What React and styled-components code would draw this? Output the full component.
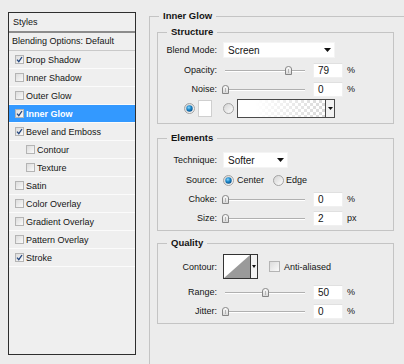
import React from "react";
import styled, { createGlobalStyle } from "styled-components";

const Global = createGlobalStyle`
  html, body { margin: 0; padding: 0; background: #ececec; overflow: hidden; }
  body { font-family: "Liberation Sans", Arial, sans-serif; font-size: 9px; color: #141414; }
`;

const Page = styled.div`
  display: flex;
  align-items: flex-start;
  width: 404px;
  height: 364px;
  overflow: hidden;
  background: #ececec;
`;

/* ---------- left styles list ---------- */
const StylesPanel = styled.div`
  box-sizing: border-box;
  flex: none;
  width: 128px;
  height: 343px;
  margin: 12px 0 0 8px;
  border: 1px solid #2e2e2e;
  background: #efefef;
  display: flex;
  flex-direction: column;
`;

const PanelHeader = styled.div`
  height: 18px;
  line-height: 18px;
  padding-left: 4px;
  border-bottom: 2px solid #8c8c8c;
`;

const BlendRow = styled.div`
  height: 17px;
  line-height: 17px;
  padding-left: 3px;
  border-bottom: 1px solid #c9c9c9;
`;

const ListRow = styled.div`
  display: flex;
  align-items: center;
  gap: 2px;
  height: 17px;
  padding-left: ${(p) => (p.$indent ? 17 : 6)}px;
  border-bottom: 1px solid #fbfbfb;
  background: ${(p) => (p.$selected ? "#3399ff" : "transparent")};
  color: ${(p) => (p.$selected ? "#ffffff" : "#141414")};
  font-weight: ${(p) => (p.$selected ? "bold" : "normal")};
`;

const CheckBox = styled.span`
  box-sizing: border-box;
  flex: none;
  width: ${(p) => p.$size || 9}px;
  height: ${(p) => p.$size || 9}px;
  border: 1px solid #b4b4b4;
  background: linear-gradient(135deg, #dcdcdc, #fafafa);
  display: flex;
  align-items: center;
  justify-content: center;
`;

const Check = () => (
  <svg width="7" height="7" viewBox="0 0 7 7">
    <path d="M1 3.6 L2.8 5.6 L6 1" fill="none" stroke="#23467e" strokeWidth="1.3" />
  </svg>
);

const styleItems = [
  { label: "Drop Shadow", checked: true },
  { label: "Inner Shadow" },
  { label: "Outer Glow" },
  { label: "Inner Glow", checked: true, selected: true },
  { label: "Bevel and Emboss", checked: true },
  { label: "Contour", indent: true },
  { label: "Texture", indent: true },
  { label: "Satin" },
  { label: "Color Overlay" },
  { label: "Gradient Overlay" },
  { label: "Pattern Overlay" },
  { label: "Stroke", checked: true },
];

/* ---------- right settings ---------- */
const Column = styled.div`
  flex: none;
  margin: 10px 0 0 13px;
`;

const Group = styled.fieldset`
  box-sizing: border-box;
  margin: 0 0 ${(p) => p.$gap || 0}px 0;
  padding: 0;
  min-width: 0;
  width: ${(p) => p.$w}px;
  height: ${(p) => (p.$h ? p.$h + "px" : "auto")};
  border: 1px solid #c4c4c4;
`;

const Legend = styled.legend`
  margin-left: 9px;
  padding: 0 4px;
  font-size: 9.5px;
  font-weight: bold;
  line-height: 12px;
  color: #141414;
`;

const OuterBody = styled.div`
  padding: 4px 0 0 7px;
`;

const GroupBody = styled.div`
  display: flex;
  flex-direction: column;
  gap: 1px;
  padding: ${(p) => p.$pad};
`;

const FormRow = styled.div`
  display: grid;
  grid-template-columns: 59px auto;
  column-gap: 6px;
  align-items: center;
  height: ${(p) => p.$h || 18}px;
  margin-bottom: ${(p) => p.$mb || 0}px;
`;

const Label = styled.span`
  text-align: right;
  white-space: nowrap;
`;

const Controls = styled.div`
  display: flex;
  align-items: center;
  gap: ${(p) => p.$gap ?? 4}px;
`;

const Select = styled.div`
  box-sizing: border-box;
  width: ${(p) => p.$w}px;
  height: 16px;
  background: #ffffff;
  border: 1px solid #f4f4f4;
  display: flex;
  align-items: center;
  justify-content: space-between;
  padding: 0 3px 0 4px;
  font-size: 10px;
  color: #141414;
`;

const DownArrow = ({ w = 7, h = 4 }) => (
  <svg width={w} height={h} viewBox={`0 0 ${w} ${h}`}>
    <polygon points={`0,0 ${w},0 ${w / 2},${h}`} fill="#111" />
  </svg>
);

const SliderBox = styled.div`
  position: relative;
  width: 84px;
  height: 10px;
  margin-right: 2px;
  &::before {
    content: "";
    position: absolute;
    left: 2px;
    right: 2px;
    top: 5px;
    height: 1px;
    background: #b0b0b0;
    box-shadow: 0 1px 0 #ffffff;
  }
`;

const ThumbWrap = styled.span`
  position: absolute;
  top: 1px;
  margin-left: -3px;
  line-height: 0;
`;

const Thumb = () => (
  <svg width="7" height="9" viewBox="0 0 7 9">
    <defs>
      <linearGradient id="tg" x1="0" y1="0" x2="0" y2="1">
        <stop offset="0" stopColor="#ffffff" />
        <stop offset="1" stopColor="#d6d6d6" />
      </linearGradient>
    </defs>
    <path d="M0.5 3 Q0.5 0.5 3.5 0.5 Q6.5 0.5 6.5 3 V8.5 H0.5 Z" fill="url(#tg)" stroke="#858585" />
    <line x1="3.5" y1="3" x2="3.5" y2="7" stroke="#b5b5b5" />
  </svg>
);

const Slider = ({ pct }) => (
  <SliderBox>
    <ThumbWrap style={{ left: `${2 + pct * 0.8}px` }}>
      <Thumb />
    </ThumbWrap>
  </SliderBox>
);

const Field = styled.div`
  box-sizing: border-box;
  width: 30px;
  height: 15px;
  background: #ffffff;
  border: 1px solid #f0f0f0;
  border-top-color: #e0e0e0;
  padding-left: 4px;
  font-size: 10px;
  line-height: 13px;
  color: #141414;
`;

const Unit = styled.span`
  font-size: 9px;
`;

const RadioSvg = ({ on }) => (
  <svg width="11" height="11" viewBox="0 0 11 11">
    <defs>
      <radialGradient id="rb" cx="0.4" cy="0.35" r="0.7">
        <stop offset="0" stopColor="#8fd8ff" />
        <stop offset="0.5" stopColor="#1a86c8" />
        <stop offset="1" stopColor="#0b4f86" />
      </radialGradient>
      <linearGradient id="rg" x1="0" y1="0" x2="1" y2="1">
        <stop offset="0" stopColor="#d2d2d2" />
        <stop offset="1" stopColor="#ffffff" />
      </linearGradient>
    </defs>
    <circle cx="5.5" cy="5.5" r="5" fill="url(#rg)" stroke="#a3a3a3" />
    {on && <circle cx="5.5" cy="5.5" r="3.2" fill="url(#rb)" />}
  </svg>
);

const ColorRow = styled.div`
  display: flex;
  align-items: center;
  height: 19px;
  padding-left: 26px;
`;

const Swatch = styled.div`
  box-sizing: border-box;
  width: 14px;
  height: 17px;
  margin: 0 11px 0 3px;
  background: #ffffff;
  border: 1px solid #cfcfcf;
`;

const GradientPicker = styled.div`
  box-sizing: border-box;
  display: flex;
  width: 98px;
  height: 19px;
  margin-left: 3px;
  border: 1px solid #4a4a4a;
`;

const GradientFill = styled.div`
  flex: 1;
  background:
    linear-gradient(to right, #ffffff 0%, #ffffff 20%, rgba(255, 255, 255, 0) 100%),
    repeating-conic-gradient(#d9d9d9 0 25%, #ffffff 0 50%) 0 0 / 6px 6px;
`;

const PickerButton = styled.div`
  flex: none;
  width: 8px;
  border-left: 1px solid #4a4a4a;
  background: #f2f2f2;
  display: flex;
  align-items: center;
  justify-content: center;
`;

const RadioLabel = styled.span`
  margin-left: ${(p) => p.$ml}px;
  margin-right: ${(p) => p.$mr || 0}px;
`;

const ContourPicker = styled.div`
  display: flex;
  height: 25px;
  border: 1px solid #333333;
  box-sizing: border-box;
  margin-right: 11px;
`;

const ContourThumb = styled.div`
  width: 26px;
  line-height: 0;
`;

const ContourButton = styled.div`
  width: 6px;
  border-left: 1px solid #333333;
  background: #f2f2f2;
  display: flex;
  align-items: center;
  justify-content: center;
`;

export default function App() {
  return (
    <Page>
      <Global />
      <StylesPanel>
        <PanelHeader>Styles</PanelHeader>
        <BlendRow>Blending Options: Default</BlendRow>
        {styleItems.map((it) => (
          <ListRow key={it.label} $indent={it.indent} $selected={it.selected}>
            <CheckBox>{it.checked && <Check />}</CheckBox>
            <span>{it.label}</span>
          </ListRow>
        ))}
      </StylesPanel>

      <Column>
        <Group $w={262} $h={372}>
          <Legend>Inner Glow</Legend>
          <OuterBody>
            <Group $w={237} $gap={8}>
              <Legend>Structure</Legend>
              <GroupBody $pad="4px 0 5px 0">
                <FormRow $h={16} $mb={2}>
                  <Label>Blend Mode:</Label>
                  <Select $w={112}>
                    <span>Screen</span>
                    <DownArrow />
                  </Select>
                </FormRow>
                <FormRow>
                  <Label>Opacity:</Label>
                  <Controls>
                    <Slider pct={79} />
                    <Field>79</Field>
                    <Unit>%</Unit>
                  </Controls>
                </FormRow>
                <FormRow>
                  <Label>Noise:</Label>
                  <Controls>
                    <Slider pct={0} />
                    <Field>0</Field>
                    <Unit>%</Unit>
                  </Controls>
                </FormRow>
                <ColorRow>
                  <RadioSvg on />
                  <Swatch />
                  <RadioSvg />
                  <GradientPicker>
                    <GradientFill />
                    <PickerButton>
                      <DownArrow w={5} h={3} />
                    </PickerButton>
                  </GradientPicker>
                </ColorRow>
              </GroupBody>
            </Group>

            <Group $w={237} $gap={6}>
              <Legend>Elements</Legend>
              <GroupBody $pad="8px 0 3px 0">
                <FormRow $h={16} $mb={2}>
                  <Label>Technique:</Label>
                  <Select $w={65}>
                    <span>Softer</span>
                    <DownArrow />
                  </Select>
                </FormRow>
                <FormRow>
                  <Label>Source:</Label>
                  <Controls $gap={0}>
                    <RadioSvg on />
                    <RadioLabel $ml={3} $mr={9}>Center</RadioLabel>
                    <RadioSvg />
                    <RadioLabel $ml={2}>Edge</RadioLabel>
                  </Controls>
                </FormRow>
                <FormRow>
                  <Label>Choke:</Label>
                  <Controls>
                    <Slider pct={0} />
                    <Field>0</Field>
                    <Unit>%</Unit>
                  </Controls>
                </FormRow>
                <FormRow>
                  <Label>Size:</Label>
                  <Controls>
                    <Slider pct={0} />
                    <Field>2</Field>
                    <Unit>px</Unit>
                  </Controls>
                </FormRow>
              </GroupBody>
            </Group>

            <Group $w={237}>
              <Legend>Quality</Legend>
              <GroupBody $pad="5px 0 3px 0">
                <FormRow $h={25} $mb={3}>
                  <Label>Contour:</Label>
                  <Controls $gap={0}>
                    <ContourPicker>
                      <ContourThumb>
                        <svg width="26" height="23" viewBox="0 0 26 23">
                          <rect width="26" height="23" fill="#ffffff" />
                          <polygon points="0,23 26,0 26,23" fill="#9a9a9a" />
                        </svg>
                      </ContourThumb>
                      <ContourButton>
                        <DownArrow w={4} h={3} />
                      </ContourButton>
                    </ContourPicker>
                    <CheckBox $size={11} />
                    <RadioLabel $ml={4}>Anti-aliased</RadioLabel>
                  </Controls>
                </FormRow>
                <FormRow>
                  <Label>Range:</Label>
                  <Controls>
                    <Slider pct={50} />
                    <Field>50</Field>
                    <Unit>%</Unit>
                  </Controls>
                </FormRow>
                <FormRow>
                  <Label>Jitter:</Label>
                  <Controls>
                    <Slider pct={0} />
                    <Field>0</Field>
                    <Unit>%</Unit>
                  </Controls>
                </FormRow>
              </GroupBody>
            </Group>
          </OuterBody>
        </Group>
      </Column>
    </Page>
  );
}
